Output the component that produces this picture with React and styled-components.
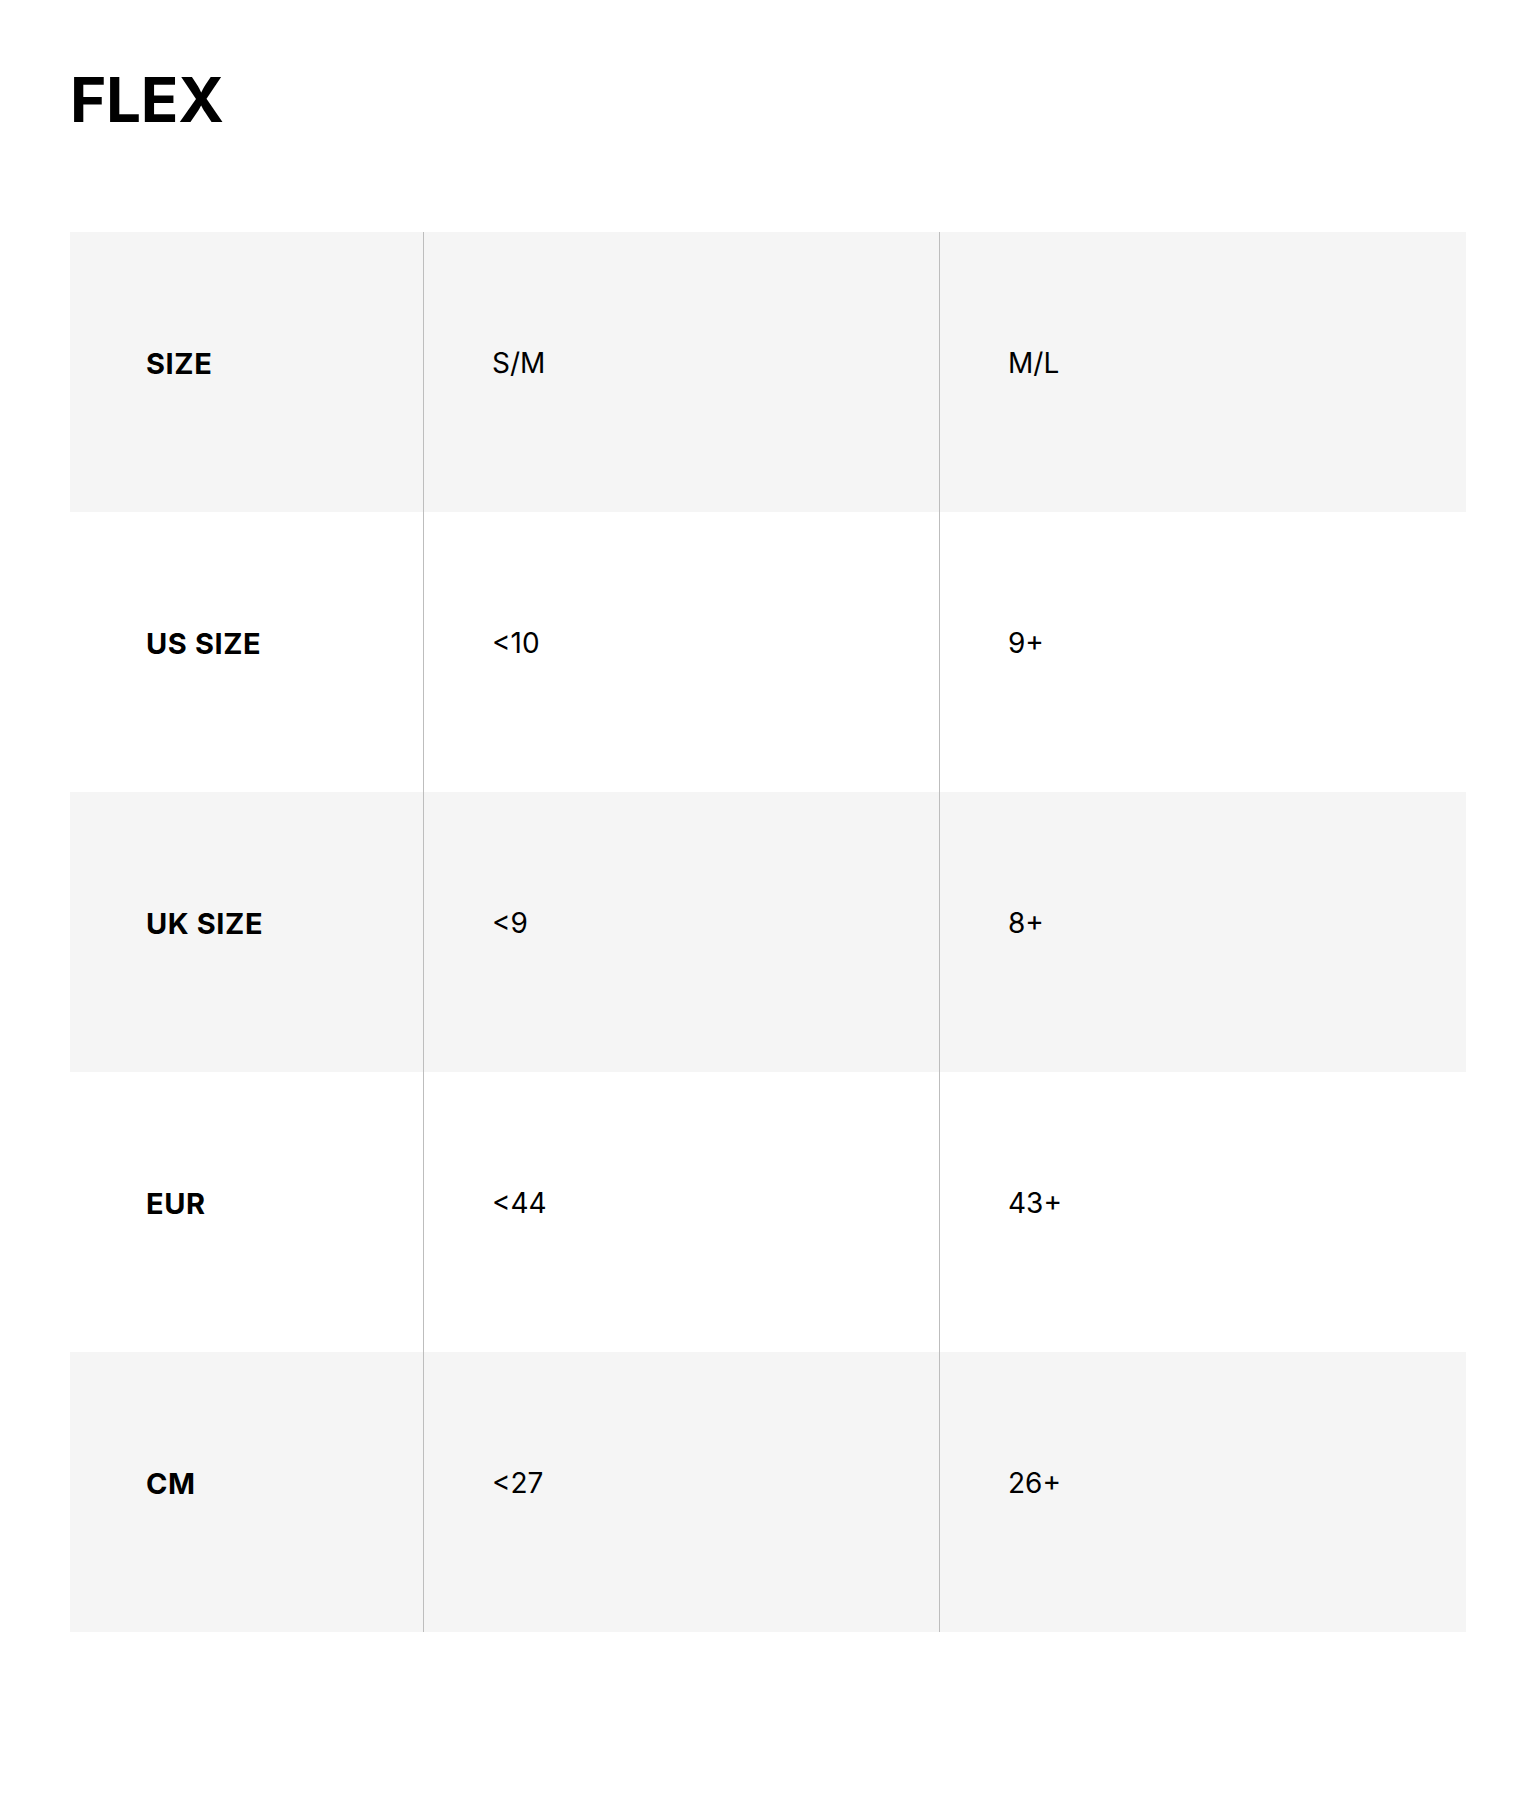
import React from "react";
import styled, { createGlobalStyle } from "styled-components";

const Global = createGlobalStyle`
  html, body { margin: 0; padding: 0; background: #fff; }
  body { font-family: Inter, "Liberation Sans", sans-serif; color: #000; }
`;

const Page = styled.main`
  padding: 64px 70px 120px 70px;
  min-height: 1800px;
  box-sizing: border-box;
`;

const Title = styled.h1`
  margin: 0;
  font-size: 62px;
  font-weight: 700;
  line-height: 72px;
  letter-spacing: -0.3px;
`;

const Table = styled.div`
  margin-top: 96px;
  display: grid;
  grid-template-columns: 353px 516px 1fr;
`;

const Cell = styled.div`
  height: 280px;
  box-sizing: border-box;
  display: flex;
  align-items: center;
  padding: 0 0 18px ${(p) => (p.$first ? "76px" : "68px")};
  background: ${(p) => (p.$shade ? "#f5f5f5" : "#fff")};
  border-left: ${(p) => (p.$first ? "none" : "1px solid #bdbdbd")};
  font-size: ${(p) => (p.$head ? "29px" : "28px")};
  font-weight: ${(p) => (p.$head ? 700 : 400)};
  letter-spacing: ${(p) => (p.$head ? "0.6px" : "0")};
`;

const rows = [
  ["SIZE", "S/M", "M/L"],
  ["US SIZE", "<10", "9+"],
  ["UK SIZE", "<9", "8+"],
  ["EUR", "<44", "43+"],
  ["CM", "<27", "26+"],
];

export default function App() {
  return (
    <>
      <Global />
      <Page>
        <Title>FLEX</Title>
        <Table>
          {rows.map((r, i) =>
            r.map((c, j) => (
              <Cell key={`${i}-${j}`} $first={j === 0} $head={j === 0} $shade={i % 2 === 0}>
                {c}
              </Cell>
            ))
          )}
        </Table>
      </Page>
    </>
  );
}
